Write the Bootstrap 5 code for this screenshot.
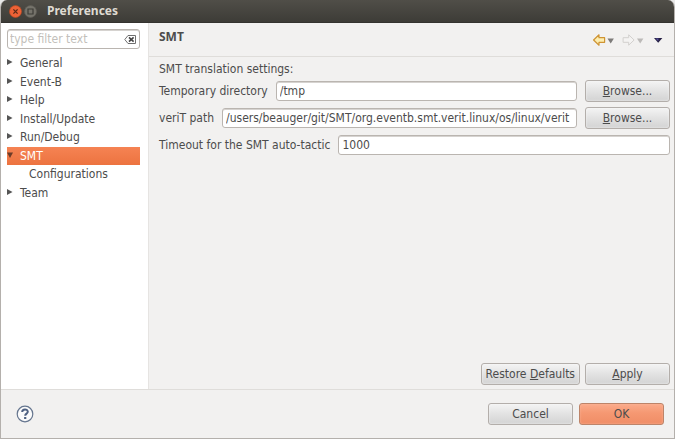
<!DOCTYPE html>
<html lang="en">
<head>
<meta charset="utf-8">
<meta name="viewport" content="width=device-width, initial-scale=1">
<title>Preferences</title>
<link rel="stylesheet" href="https://cdn.jsdelivr.net/npm/bootstrap@5.3.0/dist/css/bootstrap.min.css">
<style>
body { font: 12px/18px "DejaVu Sans Condensed", "Open Sans", sans-serif; color: #4c4c4c; background: #e9e9e9; }
.win { min-height: 100vh; background: #f2f1f0; border-radius: 7px 7px 0 0; overflow: hidden; border: 1px solid #b4b0ac; border-top: 0; }
.titlebar { height: 23px; margin: 0 -1px; padding: 0 9px; gap: 2px; background: linear-gradient(#504e48, #3d3c37); border-bottom: 1px solid #34332f; color: #dfdbd2; }
.winbtn { width: 13px; height: 13px; padding: 0; border: 0; background: none; line-height: 0; }
.titlebar h1 { font: 700 12px/18px "Noto Sans", "Open Sans", sans-serif; margin: 0 0 0 8px; }
.side { width: 147px; background: #fff; padding: 6px 8px 0 6px; }
.main-pane { border-left: 1px solid #e6e4e2; min-width: 0; }
.field { height: 20px; padding: 0 3px; font-size: 12px; line-height: 18px; color: #4c4c4c; background: #fff; border: 1px solid #bab5b0; border-radius: 3px; box-shadow: inset 0 1px 0 #d6d3d0; min-width: 0; }
.search { width: 100%; padding: 0 22px 0 2px; }
.search::placeholder { color: #c3bfbb; opacity: 1; }
.clear { position: absolute; right: 4px; top: 5px; padding: 0; border: 0; background: none; line-height: 0; }
.tree { display: grid; height: 148px; grid-auto-rows: 1fr; margin: 5px 0 0; padding: 0; list-style: none; }
.tree a { color: #4c4c4c; text-decoration: none; gap: 7px; height: 100%; }
.tree svg { flex: none; width: 6px; height: 8px; margin-bottom: 2px; }
.tree .child { padding-left: 22px; }
.tree .chosen { background: linear-gradient(#f58353, #ec7340); color: #fff; }
.head { height: 34px; padding: 0 10px; border-bottom: 1px solid #dfddda; }
.head h2 { font: 700 12px/18px "Noto Sans", "Open Sans", sans-serif; margin: 0 0 6px; }
.tool { border: 0; padding: 0; background: none; line-height: 0; }
.form-area { padding: 3px 4px 4px 10px; }
.intro { margin-bottom: 2px; }
.line { display: flex; align-items: center; gap: 8px; min-height: 22px; margin-bottom: 5px; }
.line .field { flex: 1; }
.push { height: 22px; min-width: 85px; padding: 0 4px; font-size: 12px; line-height: 18px; color: #4c4c4c; border: 1px solid #b3aeaa; border-radius: 3px; background: linear-gradient(#f4f4f4, #e4e4e4 45%, #d3d3d3); box-shadow: inset 0 0 2px #f8f8f8; }
.push:hover { color: #4c4c4c; border-color: #a09b96; }
.push.go, .push.go:hover { background: linear-gradient(#fbab8b, #f59872 45%, #f08d66); border-color: #bd8469; box-shadow: inset 0 0 2px #fbb79c; }
.actions { gap: 5px; }
.foot { height: 49px; padding: 0 10px 0 15px; gap: 6px; border-top: 1px solid #dfddda; }
</style>
<script src="https://cdn.jsdelivr.net/npm/bootstrap@5.3.0/dist/js/bootstrap.bundle.min.js"></script>
</head>
<body>
<div class="win d-flex flex-column">
  <header class="titlebar d-flex align-items-center">
    <button class="winbtn" type="button" aria-label="Close"><svg width="13" height="13" viewBox="0 0 13 13"><circle cx="6.5" cy="6.5" r="6" fill="#ee6236" stroke="#b94a25" stroke-width=".7"/><path d="M4.4 4.4l4.2 4.2M8.6 4.4L4.4 8.6" stroke="#5b2a18" stroke-width="1.3"/></svg></button>
    <button class="winbtn" type="button" aria-label="Maximize"><svg width="13" height="13" viewBox="0 0 13 13"><circle cx="6.5" cy="6.5" r="6" fill="#75736b" stroke="#5f5d56" stroke-width=".7"/><path d="M4 4h5v5H4z" fill="none" stroke="#3d3c37" stroke-width="1.2"/></svg></button>
    <h1>Preferences</h1>
  </header>
  <div class="d-flex flex-grow-1">
    <nav class="side flex-shrink-0" aria-label="Preference pages">
      <div class="position-relative">
        <input class="field search d-block" type="text" placeholder="type filter text" aria-label="Filter">
        <button class="clear" type="button" aria-label="Clear filter"><svg width="12" height="11" viewBox="0 0 12 11"><path d="M4 1.5h7.5v8H4L.8 5.5z" fill="#fff" stroke="#6f6f6f"/><path d="M5 3.3l4.6 4.4M9.6 3.3L5 7.7" stroke="#444" stroke-width="1.6"/></svg></button>
      </div>
      <ul class="tree">
        <li><a class="d-flex align-items-center" href="#"><svg viewBox="0 0 6 8"><path d="M0 1l5.5 3L0 7z" fill="#555"/></svg>General</a></li>
        <li><a class="d-flex align-items-center" href="#"><svg viewBox="0 0 6 8"><path d="M0 1l5.5 3L0 7z" fill="#555"/></svg>Event-B</a></li>
        <li><a class="d-flex align-items-center" href="#"><svg viewBox="0 0 6 8"><path d="M0 1l5.5 3L0 7z" fill="#555"/></svg>Help</a></li>
        <li><a class="d-flex align-items-center" href="#"><svg viewBox="0 0 6 8"><path d="M0 1l5.5 3L0 7z" fill="#555"/></svg>Install/Update</a></li>
        <li><a class="d-flex align-items-center" href="#"><svg viewBox="0 0 6 8"><path d="M0 1l5.5 3L0 7z" fill="#555"/></svg>Run/Debug</a></li>
        <li><a class="d-flex align-items-center chosen" href="#" aria-current="page"><svg viewBox="0 0 6 8"><path d="M0 1.5h6L3 7z" fill="#6b3b28"/></svg>SMT</a></li>
        <li><a class="d-flex align-items-center child" href="#">Configurations</a></li>
        <li><a class="d-flex align-items-center" href="#"><svg viewBox="0 0 6 8"><path d="M0 1l5.5 3L0 7z" fill="#555"/></svg>Team</a></li>
      </ul>
    </nav>
    <main class="main-pane flex-grow-1 d-flex flex-column">
      <div class="head d-flex align-items-center">
        <h2 class="me-auto">SMT</h2>
        <button class="tool me-2" type="button" aria-label="Back"><svg width="22" height="12" viewBox="0 0 22 12"><path d="M1.600 6L7 .8v2.900h5.600v4.600H7v2.900z" fill="#fdeeb0" stroke="#cf9433" stroke-width="1.200" stroke-linejoin="round"/><path d="M15.500 4.500h6.400L18.700 9.500z" fill="#7d7b79"/></svg></button>
        <button class="tool" type="button" aria-label="Forward" disabled><svg width="22" height="12" viewBox="0 0 22 12"><path d="M12.100 6L6.700 .8v2.900H1.100v4.600h5.600v2.900z" fill="#f4f3f2" stroke="#d2d0ce" stroke-linejoin="round"/><path d="M15 4.500h6.400L18.200 9.500z" fill="#bcbab8"/></svg></button>
        <button class="tool ms-2" type="button" aria-label="View menu"><svg width="12" height="12" viewBox="0 0 12 12"><path d="M2 4h8.400L6.200 8.800z" fill="#262044"/><path d="M3.500 4.500h3L6.200 7z" fill="#5650a0"/></svg></button>
      </div>
      <form class="form-area flex-grow-1 d-flex flex-column">
        <div class="intro">SMT translation settings:</div>
        <div class="line"><label for="tmp">Temporary directory</label><input class="field" id="tmp" type="text" value="/tmp"><button class="btn push" type="button"><u>B</u>rowse...</button></div>
        <div class="line"><label for="verit">veriT path</label><input class="field" id="verit" type="text" value="/users/beauger/git/SMT/org.eventb.smt.verit.linux/os/linux/verit"><button class="btn push" type="button"><u>B</u>rowse...</button></div>
        <div class="line"><label for="timeout">Timeout for the SMT auto-tactic</label><input class="field" id="timeout" type="text" value="1000"></div>
        <div class="actions d-flex justify-content-end mt-auto"><button class="btn push" type="button">Restore <u>D</u>efaults</button><button class="btn push" type="button"><u>A</u>pply</button></div>
      </form>
    </main>
  </div>
  <footer class="foot d-flex align-items-center">
    <button class="tool me-auto" type="button" aria-label="Help"><svg width="18" height="18" viewBox="0 0 18 18"><circle cx="9" cy="9" r="7.800" fill="#fbfbfb" stroke="#66768f" stroke-width="1.200"/><path d="M6.200 7.100C6.200 3.500 11.800 3.600 11.800 6.800C11.800 8.700 9.200 8.500 9.200 10.700" fill="none" stroke="#4f6182" stroke-width="2"/><path d="M8.100 12h2.200v2H8.100z" fill="#4f6182"/></svg></button>
    <button class="btn push" type="button">Cancel</button><button class="btn push go" type="button">OK</button>
  </footer>
</div>
</body>
</html>
